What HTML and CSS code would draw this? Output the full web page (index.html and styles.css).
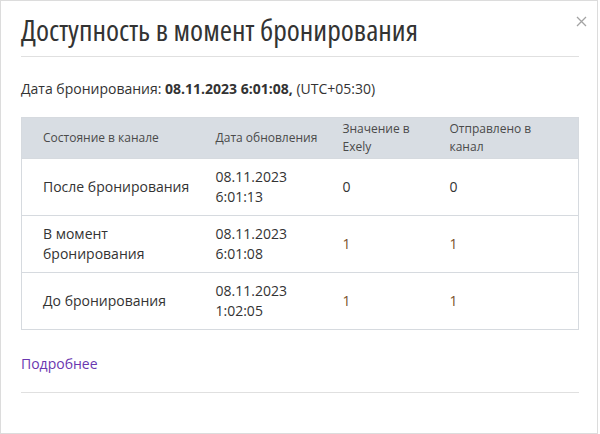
FILE: index.html
```html
<!DOCTYPE html>
<html lang="ru">
<head>
  <meta charset="UTF-8" />
  <title>Доступность в момент бронирования</title>
  <link rel="stylesheet" href="styles.css">
</head>
<body>

<div class="modal">
  <div class="modal-header">
    <h1>Доступность в момент бронирования</h1>
    <button class="close" aria-label="Закрыть">
      <svg width="11" height="11" viewBox="0 0 11 11">
        <path d="M1 1 L10 10 M10 1 L1 10" stroke="#a3a3a3" stroke-width="1.3" fill="none"/>
      </svg>
    </button>
  </div>

  <div class="modal-body">
    <p class="booking-date">Дата бронирования: <b>08.11.2023 6:01:08,</b> (UTC+05:30)</p>

    <table class="avail">
      <colgroup>
        <col class="c1"><col class="c2"><col class="c3"><col class="c4">
      </colgroup>
      <thead>
        <tr>
          <th>Состояние в канале</th>
          <th>Дата обновления</th>
          <th>Значение в Exely</th>
          <th>Отправлено в канал</th>
        </tr>
      </thead>
      <tbody>
        <tr>
          <td>После бронирования</td>
          <td>08.11.2023<br>6:01:13</td>
          <td>0</td>
          <td>0</td>
        </tr>
        <tr>
          <td>В момент бронирования</td>
          <td>08.11.2023<br>6:01:08</td>
          <td class="num">1</td>
          <td class="num">1</td>
        </tr>
        <tr>
          <td>До бронирования</td>
          <td>08.11.2023<br>1:02:05</td>
          <td class="num">1</td>
          <td class="num">1</td>
        </tr>
      </tbody>
    </table>

    <a class="more" href="#">Подробнее</a>
  </div>

  <div class="modal-footer"></div>
</div>

</body>
</html>
```

FILE: styles.css
```css
* {
  margin: 0;
  padding: 0;
  box-sizing: border-box;
}

body {
  background: #fff;
  font-family: 'Open Sans', sans-serif;
  color: #333;
}

.modal {
  width: 598px;
  height: 434px;
  border: 1px solid #dcdcdc;
  padding: 0 18px 0 20px;
}

.modal-header {
  position: relative;
  padding-top: 9px;
  padding-bottom: 6px;
  border-bottom: 1px solid #e0e0e0;
}

.modal-header h1 {
  font-size: 29.7px;
  font-stretch: 75%;
  font-weight: normal;
  line-height: 40px;
  color: #333;
}

.close {
  position: absolute;
  top: 15px;
  right: -8px;
  border: none;
  background: none;
  width: 11px;
  height: 11px;
  cursor: pointer;
}

.close svg {
  display: block;
}

.modal-body {
  padding-top: 22px;
  padding-bottom: 18px;
  border-bottom: 1px solid #e0e0e0;
}

.booking-date {
  font-size: 14px;
  line-height: 20px;
  margin-bottom: 18px;
}

.avail {
  width: 100%;
  border-collapse: collapse;
  table-layout: fixed;
  border: 1px solid #d6dadf;
  margin-bottom: 22px;
}

.c1 { width: 173px; }
.c2 { width: 127px; }
.c3 { width: 107px; }

.avail th {
  background: #d8dde3;
  font-size: 12px;
  font-weight: normal;
  line-height: 18px;
  color: #4a4a4a;
  text-align: left;
  padding: 2px 2px 2px 21px;
  height: 40px;
}

.avail th:last-child {
  padding-right: 20px;
}

.avail td {
  font-size: 14px;
  line-height: 20px;
  padding: 8px 4px 8px 21px;
  height: 56px;
  border-top: 1px solid #d6dadf;
  vertical-align: middle;
}

.avail td.num {
  color: #7a4f2a;
}

.more {
  display: inline-block;
  font-size: 14px;
  line-height: 20px;
  color: #6a37b0;
  text-decoration: none;
}
```
